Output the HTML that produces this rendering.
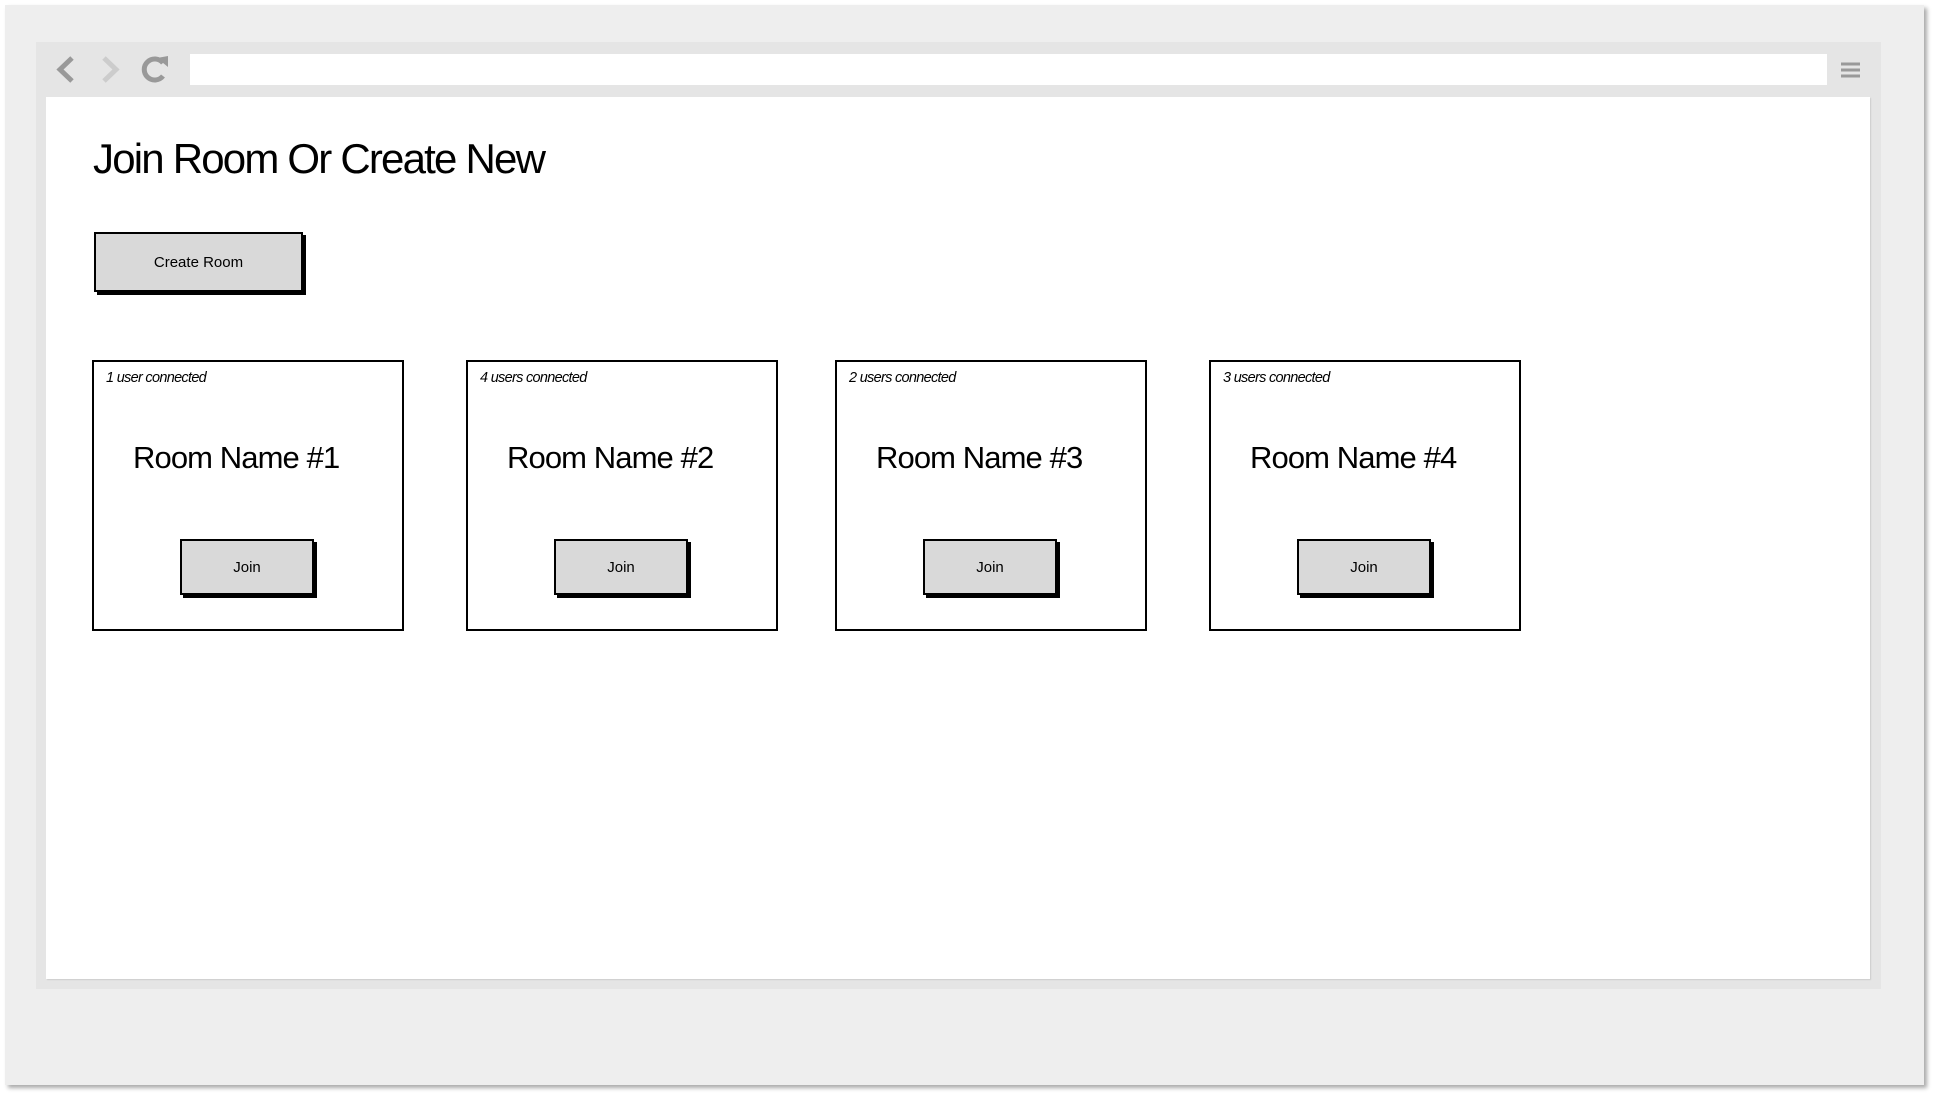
<!DOCTYPE html>
<html><head><meta charset="utf-8"><style>
*{margin:0;padding:0;box-sizing:border-box}
body{width:1934px;height:1094px;background:#fff;position:relative;overflow:hidden;font-family:"Liberation Sans",sans-serif}
.outer{position:absolute;left:5px;top:5px;width:1919px;height:1080px;background:#eee;box-shadow:3px 3px 4px #aaa}
.frame{position:absolute;left:36px;top:42px;width:1845px;height:947px;background:#e5e5e5}
.addr{position:absolute;left:190px;top:54px;width:1637px;height:31px;background:#fff}
.content{position:absolute;left:46px;top:97px;width:1824px;height:882px;background:#fff;box-shadow:1px 1px 1px #ccc}
h1{position:absolute;left:93px;top:135px;font-size:42px;font-weight:normal;letter-spacing:-1.8px;color:#000;white-space:nowrap}
.btn{position:absolute;background:#d9d9d9;border:2px solid #000;box-shadow:3px 3px 0 #000;display:flex;align-items:center;justify-content:center;color:#000}
.card{position:absolute;top:360px;width:312px;height:271px;border:2px solid #000;background:#fff}
.card .u{position:absolute;left:12px;top:8px;font-size:14.5px;font-style:italic;letter-spacing:-0.7px}
.card .n{position:absolute;left:39px;top:78px;font-size:31px;letter-spacing:-0.9px;white-space:nowrap}
.card .btn{left:86px;top:177px;width:134px;height:56px;font-size:15px}
</style></head><body>
<div class="outer"></div>
<div class="frame"></div>
<div class="addr"></div>
<svg style="position:absolute;left:0;top:0" width="1934" height="100">
<polyline points="72,58 60,69.5 72,81" fill="none" stroke="#999" stroke-width="5"/>
<polyline points="104,58 116,69.5 104,81" fill="none" stroke="#ccc" stroke-width="5"/>
<path d="M163,63 A10.5,10.5 0 1 0 163,76" fill="none" stroke="#999" stroke-width="5"/>
<polygon points="157,58 168,56 168,67" fill="#999"/>
<g stroke="#999" stroke-width="3"><line x1="1841" y1="64" x2="1860" y2="64"/><line x1="1841" y1="70" x2="1860" y2="70"/><line x1="1841" y1="76" x2="1860" y2="76"/></g>
</svg>
<div class="content"></div>
<h1>Join Room Or Create New</h1>
<div class="btn" style="left:94px;top:232px;width:209px;height:60px;font-size:15px">Create Room</div>
<div class="card" style="left:92px"><div class="u">1 user connected</div><div class="n">Room Name #1</div><div class="btn">Join</div></div>
<div class="card" style="left:466px"><div class="u">4 users connected</div><div class="n">Room Name #2</div><div class="btn">Join</div></div>
<div class="card" style="left:835px"><div class="u">2 users connected</div><div class="n">Room Name #3</div><div class="btn">Join</div></div>
<div class="card" style="left:1209px"><div class="u">3 users connected</div><div class="n">Room Name #4</div><div class="btn">Join</div></div>
</body></html>
